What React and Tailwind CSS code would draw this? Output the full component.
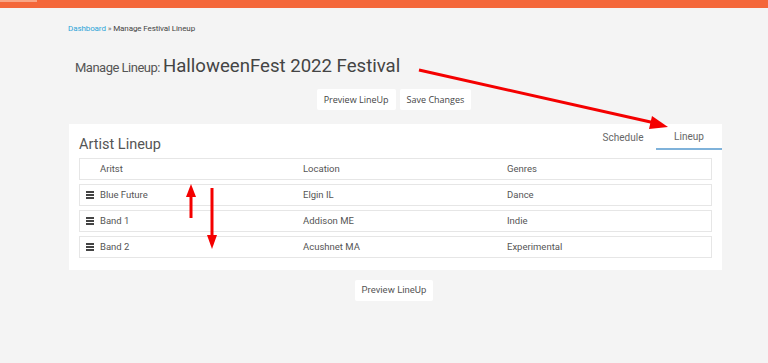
import React from "react";

const rows = [
  { name: "Blue Future", location: "Elgin IL", genre: "Dance" },
  { name: "Band 1", location: "Addison ME", genre: "Indie" },
  { name: "Band 2", location: "Acushnet MA", genre: "Experimental" },
];

const DragHandle = () => (
  <div className="flex flex-col gap-[1px] w-[8px] mr-[6px]">
    <span className="block h-[2px] bg-[#444]" />
    <span className="block h-[2px] bg-[#444]" />
    <span className="block h-[2px] bg-[#444]" />
  </div>
);

function Arrows() {
  return (
    <svg className="absolute inset-0 pointer-events-none" width="768" height="363">
      <line x1="419" y1="70" x2="655" y2="123" stroke="#f40000" strokeWidth="3" />
      <polygon points="668,127 652,116 649,129" fill="#f40000" />
      <line x1="191" y1="218" x2="191" y2="196" stroke="#f40000" strokeWidth="3" />
      <polygon points="191,184 186,197 196,197" fill="#f40000" />
      <line x1="212" y1="188" x2="212" y2="236" stroke="#f40000" strokeWidth="3" />
      <polygon points="212,249 207,235 217,235" fill="#f40000" />
    </svg>
  );
}

export default function App() {
  return (
    <div className="relative w-[768px] h-[363px] bg-[#f4f4f4] overflow-hidden font-['Roboto',sans-serif] text-[#555]">
      {/* top bar */}
      <div className="h-[8px] bg-[#f4673a] relative">
        <div className="absolute left-0 top-0 w-[37px] h-[2px] bg-[#f9a585]" />
      </div>

      <div className="pl-[68px] pt-[15px] text-[8px] tracking-[-0.1px]">
        <span className="text-[#2ea4d8]">Dashboard</span>
        <span className="text-[#777]"> » </span>
        <span className="text-[#444]">Manage Festival Lineup</span>
      </div>

      <div className="pl-[75px] mt-[17px] flex items-baseline text-[#444]">
        <span className="text-[13px] tracking-[-0.5px] mr-[3px] text-[#555]">Manage Lineup:</span>
        <span className="text-[18.6px] leading-[28px]">HalloweenFest 2022 Festival</span>
      </div>

      <div className="flex justify-center gap-[4px] mt-[9px] font-['Open_Sans',sans-serif] text-[9px] text-[#444] pl-[20px]">
        <div className="bg-white rounded-[2px] h-[21px] px-[7px] flex items-center">Preview LineUp</div>
        <div className="bg-white rounded-[2px] h-[21px] px-[7px] flex items-center">Save Changes</div>
      </div>

      <div className="mx-[69px] mt-[14px] w-[653px] bg-white pb-[12px]">
        <div className="flex items-end justify-between h-[26px] pl-[10px]">
          <div className="text-[14.5px] text-[#555] leading-none mb-[-2px]">Artist Lineup</div>
          <div className="flex text-[10px] text-[#666] h-[26px]">
            <div className="w-[66px] flex items-center justify-center">Schedule</div>
            <div className="w-[66px] flex items-center justify-center border-b-2 border-[#7fb2da]">Lineup</div>
          </div>
        </div>

        <div className="px-[10px] mt-[8px] flex flex-col gap-[4px] text-[9.5px]">
          <div className="grid grid-cols-[223px_204px_1fr] h-[22px] items-center border border-[#e6e6e6] text-[#555]">
            <div className="pl-[20px]">Aritst</div>
            <div>Location</div>
            <div>Genres</div>
          </div>
          {rows.map((r) => (
            <div
              key={r.name}
              className="grid grid-cols-[223px_204px_1fr] h-[22px] items-center border border-[#e6e6e6] text-[#555]"
            >
              <div className="flex items-center pl-[6px]">
                <DragHandle />
                {r.name}
              </div>
              <div>{r.location}</div>
              <div>{r.genre}</div>
            </div>
          ))}
        </div>
      </div>

      <div className="flex justify-center mt-[10px] text-[9.5px] pl-[20px]">
        <div className="bg-white rounded-[2px] h-[21px] px-[7px] flex items-center text-[#555]">Preview LineUp</div>
      </div>

      <Arrows />
    </div>
  );
}
